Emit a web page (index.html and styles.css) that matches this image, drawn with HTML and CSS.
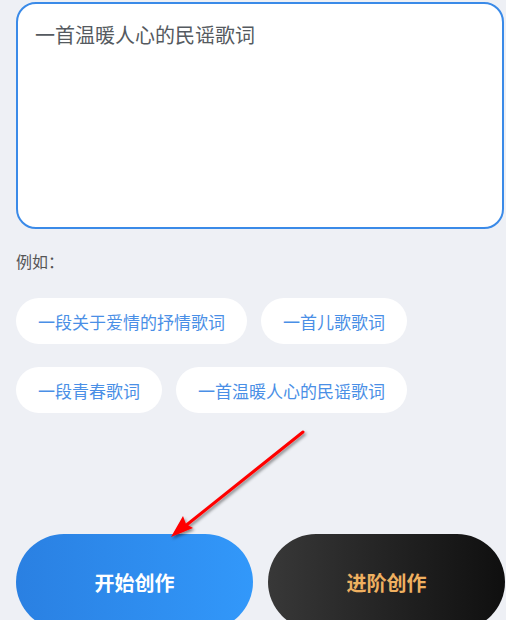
FILE: index.html
```html
<!DOCTYPE html>
<html lang="zh">
<head>
<meta charset="utf-8">
<link rel="stylesheet" href="styles.css">
</head>
<body>
<div class="page">
  <div class="input-box">一首温暖人心的民谣歌词</div>
  <div class="label">例如：</div>
  <div class="chips">
    <span class="chip">一段关于爱情的抒情歌词</span>
    <span class="chip">一首儿歌歌词</span>
    <span class="chip">一段青春歌词</span>
    <span class="chip">一首温暖人心的民谣歌词</span>
  </div>
  <div class="actions">
    <button class="btn btn-primary">开始创作</button>
    <button class="btn btn-dark">进阶创作</button>
  </div>
  <svg class="arrow" width="506" height="620" viewBox="0 0 506 620">
    <defs>
      <filter id="sh" x="-20%" y="-20%" width="140%" height="140%">
        <feDropShadow dx="1.5" dy="2" stdDeviation="1.6" flood-color="#000" flood-opacity="0.45"/>
      </filter>
    </defs>
    <g filter="url(#sh)">
      <line x1="303" y1="432" x2="184" y2="527" stroke="#f00" stroke-width="3" stroke-linecap="round"/>
      <polygon points="171,537 183,516 186,524 193,528" fill="#f00"/>
    </g>
  </svg>
</div>
</body>
</html>
```

FILE: styles.css
```css
html, body {
  margin: 0;
  padding: 0;
  background: #eef0f5;
}
body {
  font-family: "Noto Sans CJK SC", "Noto Sans", sans-serif;
  width: 506px;
  height: 620px;
  overflow: hidden;
}
.page {
  position: relative;
  padding: 2px 1px 0 16px;
  height: 618px;
}
.input-box {
  box-sizing: border-box;
  width: 488px;
  height: 227px;
  background: #fff;
  border: 2px solid #3a8ae8;
  border-radius: 20px;
  padding: 21px 17px;
  font-size: 20px;
  line-height: 20px;
  color: #555a60;
}
.label {
  margin-top: 21px;
  font-size: 16px;
  line-height: 22px;
  color: #555;
}
.chips {
  margin-top: 26px;
  display: flex;
  flex-wrap: wrap;
  column-gap: 14px;
  row-gap: 23px;
  width: 400px;
}
.chip {
  display: inline-flex;
  align-items: center;
  height: 46px;
  padding: 0 22px;
  background: #fff;
  border-radius: 23px;
  font-size: 17px;
  color: #4a8fe6;
  white-space: nowrap;
}
.actions {
  margin-top: 121px;
  display: flex;
  gap: 15px;
}
.btn {
  width: 237px;
  height: 96px;
  border: none;
  border-radius: 48px;
  font-family: "Noto Sans CJK SC", "Noto Sans", sans-serif;
  font-size: 20px;
  font-weight: bold;
  padding: 0;
}
.btn-primary {
  background: linear-gradient(90deg, #2a80e2, #3298fa);
  color: #fff;
}
.btn-dark {
  background: linear-gradient(90deg, #383838, #0f0f0f);
  color: #efb060;
}
.arrow {
  position: absolute;
  left: 0;
  top: 0;
  pointer-events: none;
}
```
